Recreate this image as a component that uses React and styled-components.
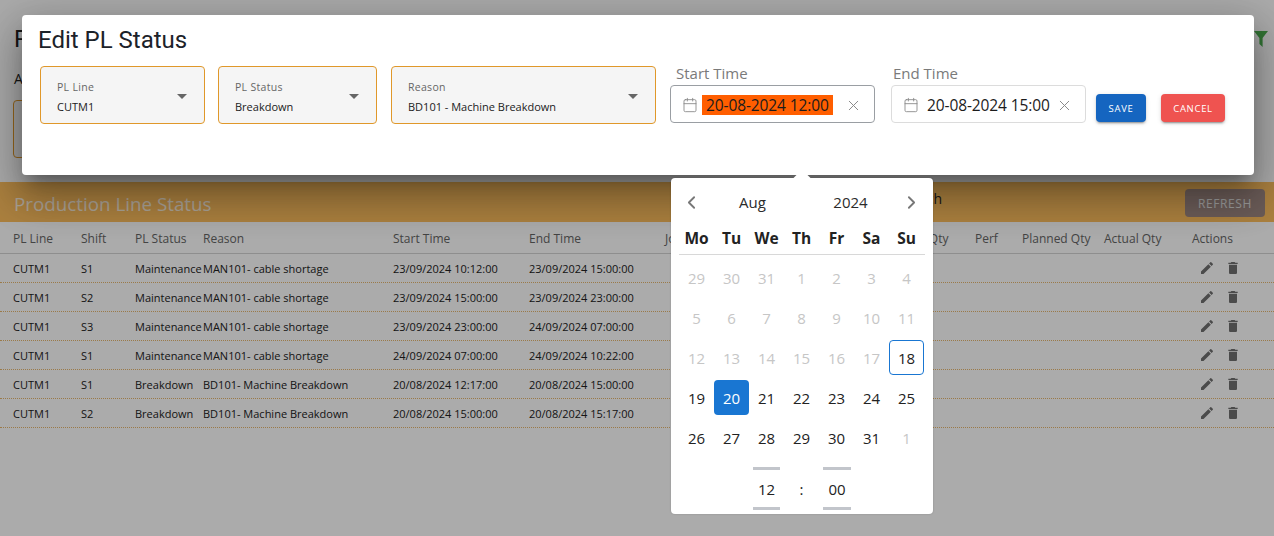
import React from 'react'
import styled, { createGlobalStyle } from 'styled-components'
import { Calendar, ChevronLeft, ChevronRight, X } from 'lucide-react'

const UI_FONT = `"Open Sans", "Noto Sans", "Liberation Sans", sans-serif`

const GLOBAL = createGlobalStyle`
	html, body {
		margin: 0;
		padding: 0;
		background: #fff;
		overflow: hidden;
	}
	* {
		box-sizing: border-box;
	}
	body {
		font-family: ${UI_FONT};
		color: #222;
	}
`

const PAGE = styled.div`
	position: relative;
	width: 1274px;
	height: 536px;
	overflow: hidden;
`

/* page behind the dialog */
const TOP_AREA = styled.div`
	height: 182px;
	padding: 26px 6px 0 14px;
	display: flex;
	flex-direction: column;
`
const TOP_TITLE_ROW = styled.div`
	display: flex;
	justify-content: space-between;
	align-items: center;
	height: 26px;
	font: 400 24px Roboto, sans-serif;
`
const TOP_LABEL = styled.div`
	margin-top: 17px;
	height: 20px;
	font-size: 14px;
`
const TOP_BOX = styled.div`
	margin-top: 11px;
	width: 170px;
	height: 58px;
	margin-left: -1px;
	border: 1px solid #e0982a;
	border-radius: 4px;
	background: #f5f5f5;
`
const BAND = styled.div`
	height: 40px;
	background: #ffbf5e;
	display: flex;
	align-items: center;
	justify-content: space-between;
	padding: 0 9px 0 14px;
	color: #fff;
`
const BAND_TITLE = styled.div`
	font-size: 18.8px;
	padding-top: 4px;
	font-weight: 400;
	opacity: 0.82;
`
const BAND_RIGHT = styled.div`
	display: flex;
	align-items: center;
	gap: 243px;
`
const BAND_SEARCH = styled.div`
	color: #222;
	font-size: 14px;
	margin-top: -8px;
`
const REFRESH = styled.div`
	width: 80px;
	height: 28px;
	margin-top: 2px;
	border-radius: 4px;
	background: #a08a84;
	color: #e6e6e6;
	font-size: 12px;
	letter-spacing: 0.6px;
	display: flex;
	align-items: center;
	justify-content: center;
`
const TABLE_ROW = styled.div`
	display: grid;
	grid-template-columns: 68px 54px 68px 190px 136px 136px 225px 85px 47px 82px 88px 1fr;
	align-items: center;
	padding-left: 13px;
	padding-top: ${({ $head }) => ($head ? '2px' : '0')};
	height: ${({ $head }) => ($head ? '32px' : '29px')};
	font-size: ${({ $head }) => ($head ? '12px' : '11px')};
	color: ${({ $head }) => ($head ? '#666' : '#222')};
	border-bottom: 1px ${({ $head }) => ($head ? 'solid #d4d4d4' : 'dotted #e8b76c')};
	white-space: nowrap;
`
const ACTIONS = styled.div`
	display: flex;
	gap: 10px;
	padding-left: 7px;
	color: #707070;
`

/* dim layer and dialog */
const OVERLAY = styled.div`
	position: absolute;
	inset: 0;
	background: rgba(0, 0, 0, 0.33);
`
const DIALOG = styled.div`
	position: absolute;
	left: 22px;
	top: 15px;
	width: 1232px;
	height: 160px;
	background: #fff;
	border-radius: 4px;
	box-shadow: 0 11px 15px -7px rgba(0, 0, 0, 0.3),
		0 24px 38px 3px rgba(0, 0, 0, 0.2),
		0 9px 46px 8px rgba(0, 0, 0, 0.18);
	padding: 11px 16px 0 16px;
`
const DIALOG_TITLE = styled.h2`
	margin: 0;
	font: 400 24px/28px Roboto, sans-serif;
	color: #1c2229;
`
const FIELD_ROW = styled.div`
	margin-top: 12px;
	margin-left: 2px;
	display: flex;
	align-items: flex-start;
`
const SELECT = styled.div`
	position: relative;
	width: ${({ $w }) => $w}px;
	margin-right: ${({ $gap }) => $gap}px;
	height: 58px;
	padding: 13px 16px 0;
	background: #f5f5f5;
	border: 1px solid #e0982a;
	border-radius: 4px;
`
const SELECT_LABEL = styled.div`
	font-size: 10.5px;
	line-height: 14px;
	letter-spacing: 0.3px;
	color: #666;
`
const SELECT_VALUE = styled.div`
	margin-top: 6px;
	font-size: 11px;
	line-height: 14px;
	color: #222;
`
const CARET = styled.span`
	position: absolute;
	right: 17px;
	top: 27px;
	border-left: 5.5px solid transparent;
	border-right: 5.5px solid transparent;
	border-top: 5px solid #666;
`
const DATE_BLOCK = styled.div`
	width: ${({ $w }) => $w}px;
	margin-right: ${({ $gap }) => $gap}px;
`
const DATE_LABEL = styled.div`
	height: 19px;
	padding-left: ${({ $pad }) => $pad}px;
	font-size: 15px;
	line-height: 14px;
	color: #7a7a7a;
`
const DATE_INPUT = styled.div`
	height: 38px;
	display: flex;
	align-items: center;
	padding: 2px 12px 0 11px;
	border: 1px solid ${({ $active }) => ($active ? '#9a9ea3' : '#dcdcdc')};
	border-radius: 4px;
	color: #888;
`
const DATE_TEXT = styled.span`
	margin-left: ${({ $active }) => ($active ? '4px' : '8px')};
	padding: 0 ${({ $active }) => ($active ? '4px' : '0')};
	height: 20px;
	font-size: 15.5px;
	line-height: 20px;
	letter-spacing: -0.1px;
	white-space: nowrap;
	color: #1c1c1c;
	background: ${({ $active }) => ($active ? '#ff5e00' : 'transparent')};
`
const CLEAR = styled.span`
	margin-left: auto;
	display: flex;
	color: #8a8a8a;
`
const BUTTON = styled.div`
	width: ${({ $w }) => $w}px;
	margin-top: 28px;
	margin-right: ${({ $gap }) => $gap}px;
	height: 28px;
	border-radius: 4px;
	background: ${({ $bg }) => $bg};
	color: #fff;
	font-size: 9.5px;
	letter-spacing: 0.7px;
	display: flex;
	align-items: center;
	justify-content: center;
	box-shadow: 0 3px 1px -2px rgba(0, 0, 0, 0.2), 0 2px 2px rgba(0, 0, 0, 0.14), 0 1px 5px rgba(0, 0, 0, 0.12);
`

/* date picker popover */
const POPOVER = styled.div`
	position: absolute;
	left: 671px;
	top: 178px;
	width: 262px;
	height: 336px;
	padding: 0 8px;
	background: #fff;
	border-radius: 4px;
	box-shadow: 0 0 2px rgba(0, 0, 0, 0.2);

	&::before {
		content: '';
		position: absolute;
		left: 125px;
		top: -6px;
		width: 12px;
		height: 12px;
		background: #fff;
		transform: rotate(45deg);
	}
`
const CAL_HEADER = styled.div`
	position: relative;
	height: 48px;
	padding-right: 2px;
	display: grid;
	grid-template-columns: 25px 97px 99px 1fr;
	align-items: center;
	font-size: 15px;
	color: #2b2b2b;
	text-align: center;
`
const NAV = styled.span`
	display: flex;
	justify-content: center;
	color: #777;
`
const WEEK_HEAD = styled.div`
	display: grid;
	grid-template-columns: repeat(7, 35px);
	height: 29px;
	border-bottom: 1px solid #d8d8d8;
	font-size: 15.5px;
	font-weight: 700;
	line-height: 24px;
	text-align: center;
	color: #222;
`
const DAY_GRID = styled.div`
	display: grid;
	grid-template-columns: repeat(7, 35px);
	grid-auto-rows: 40px;
	margin-top: 2px;
`
const DAY = styled.div`
	display: flex;
	align-items: center;
	justify-content: center;
	height: 35px;
	margin-top: 3px;
	font-size: 15px;
	border-radius: 4px;
	color: ${({ $muted, $selected }) => ($selected ? '#fff' : $muted ? '#c6c6c6' : '#222')};
	background: ${({ $selected }) => ($selected ? '#1976d2' : 'transparent')};
	border: ${({ $today }) => ($today ? '1px solid #1976d2' : 'none')};
`
const TIME_ROW = styled.div`
	display: grid;
	grid-template-columns: 27px 43px 28px;
	justify-content: center;
	margin-top: 10px;
`
const TIME_CELL = styled.div`
	height: 43px;
	padding-top: 1px;
	display: flex;
	align-items: center;
	justify-content: center;
	font-size: 15px;
	color: #222;
	border-top: ${({ $bars }) => ($bars ? '3px solid #c2c5cb' : 'none')};
	border-bottom: ${({ $bars }) => ($bars ? '3px solid #c2c5cb' : 'none')};
`

const ROWS = [
	['CUTM1', 'S1', 'Maintenance', 'MAN101- cable shortage', '23/09/2024 10:12:00', '23/09/2024 15:00:00'],
	['CUTM1', 'S2', 'Maintenance', 'MAN101- cable shortage', '23/09/2024 15:00:00', '23/09/2024 23:00:00'],
	['CUTM1', 'S3', 'Maintenance', 'MAN101- cable shortage', '23/09/2024 23:00:00', '24/09/2024 07:00:00'],
	['CUTM1', 'S1', 'Maintenance', 'MAN101- cable shortage', '24/09/2024 07:00:00', '24/09/2024 10:22:00'],
	['CUTM1', 'S1', 'Breakdown', 'BD101- Machine Breakdown', '20/08/2024 12:17:00', '20/08/2024 15:00:00'],
	['CUTM1', 'S2', 'Breakdown', 'BD101- Machine Breakdown', '20/08/2024 15:00:00', '20/08/2024 15:17:00'],
]
const HEADS = ['PL Line', 'Shift', 'PL Status', 'Reason', 'Start Time', 'End Time', 'Job', 'Target Qty', 'Perf', 'Planned Qty', 'Actual Qty', 'Actions']
const WEEK = ['Mo', 'Tu', 'We', 'Th', 'Fr', 'Sa', 'Su']
const DAYS = [
	...[29, 30, 31].map((d) => ({ d, muted: true })),
	...Array.from({ length: 18 }, (_, i) => ({ d: i + 1, muted: i + 1 !== 18 })),
	...Array.from({ length: 13 }, (_, i) => ({ d: i + 19 })),
	{ d: 1, muted: true },
].map((item) => ({ ...item, selected: item.d === 20, today: item.d === 18 }))

const EDIT_ICON = () => (
	<svg width="16" height="16" viewBox="0 0 24 24" fill="currentColor">
		<path d="M3 17.25V21h3.75L17.81 9.94l-3.75-3.75L3 17.25zM20.71 7.04c.39-.39.39-1.02 0-1.41l-2.34-2.34a.9959.9959 0 0 0-1.41 0l-1.83 1.83 3.75 3.75 1.83-1.83z" />
	</svg>
)
const DELETE_ICON = () => (
	<svg width="16" height="16" viewBox="0 0 24 24" fill="currentColor">
		<path d="M6 19c0 1.1.9 2 2 2h8c1.1 0 2-.9 2-2V7H6v12zM19 4h-3.5l-1-1h-5l-1 1H5v2h14V4z" />
	</svg>
)
const FILTER_ICON = () => (
	<svg width="14" height="16" viewBox="0 0 14 16" fill="#4caf50">
		<path d="M0 0h14L8.6 7V16L5.4 13V7z" />
	</svg>
)

const APP = () => {
	return (
		<PAGE>
			<GLOBAL />
			<TOP_AREA>
				<TOP_TITLE_ROW>
					<span>PL Status</span>
					<FILTER_ICON />
				</TOP_TITLE_ROW>
				<TOP_LABEL>Add</TOP_LABEL>
				<TOP_BOX />
			</TOP_AREA>
			<BAND>
				<BAND_TITLE>Production Line Status</BAND_TITLE>
				<BAND_RIGHT>
					<BAND_SEARCH>Search</BAND_SEARCH>
					<REFRESH>REFRESH</REFRESH>
				</BAND_RIGHT>
			</BAND>
			<TABLE_ROW $head>
				{HEADS.map((h) => (
					<div key={h}>{h}</div>
				))}
			</TABLE_ROW>
			{ROWS.map((row, i) => (
				<TABLE_ROW key={i}>
					{row.map((cell, j) => (
						<div key={j}>{cell}</div>
					))}
					<div />
					<div />
					<div />
					<div />
					<div />
					<ACTIONS>
						<EDIT_ICON />
						<DELETE_ICON />
					</ACTIONS>
				</TABLE_ROW>
			))}

			<OVERLAY />

			<DIALOG>
				<DIALOG_TITLE>Edit PL Status</DIALOG_TITLE>
				<FIELD_ROW>
					<SELECT $w={165} $gap={13}>
						<SELECT_LABEL>PL Line</SELECT_LABEL>
						<SELECT_VALUE>CUTM1</SELECT_VALUE>
						<CARET />
					</SELECT>
					<SELECT $w={159} $gap={14}>
						<SELECT_LABEL>PL Status</SELECT_LABEL>
						<SELECT_VALUE>Breakdown</SELECT_VALUE>
						<CARET />
					</SELECT>
					<SELECT $w={265} $gap={14}>
						<SELECT_LABEL>Reason</SELECT_LABEL>
						<SELECT_VALUE>BD101 - Machine Breakdown</SELECT_VALUE>
						<CARET />
					</SELECT>
					<DATE_BLOCK $w={205} $gap={16}>
						<DATE_LABEL $pad={6}>Start Time</DATE_LABEL>
						<DATE_INPUT $active>
							<Calendar size={16} strokeWidth={1.3} />
							<DATE_TEXT $active>20-08-2024 12:00</DATE_TEXT>
							<CLEAR>
								<X size={17} strokeWidth={1.4} />
							</CLEAR>
						</DATE_INPUT>
					</DATE_BLOCK>
					<DATE_BLOCK $w={195} $gap={10}>
						<DATE_LABEL $pad={2}>End Time</DATE_LABEL>
						<DATE_INPUT>
							<Calendar size={16} strokeWidth={1.3} />
							<DATE_TEXT>20-08-2024 15:00</DATE_TEXT>
							<CLEAR>
								<X size={17} strokeWidth={1.4} />
							</CLEAR>
						</DATE_INPUT>
					</DATE_BLOCK>
					<BUTTON $w={50} $gap={15} $bg="#1565c0">SAVE</BUTTON>
					<BUTTON $w={64} $gap={0} $bg="#ef5350">CANCEL</BUTTON>
				</FIELD_ROW>
			</DIALOG>

			<POPOVER>
				<CAL_HEADER>
					<NAV>
						<ChevronLeft size={21} strokeWidth={2.1} />
					</NAV>
					<span>Aug</span>
					<span>2024</span>
					<NAV>
						<ChevronRight size={21} strokeWidth={2.1} />
					</NAV>
				</CAL_HEADER>
				<WEEK_HEAD>
					{WEEK.map((w) => (
						<div key={w}>{w}</div>
					))}
				</WEEK_HEAD>
				<DAY_GRID>
					{DAYS.map((item, i) => (
						<DAY key={i} $muted={item.muted} $selected={item.selected && !item.muted} $today={item.today && !item.muted}>
							{item.d}
						</DAY>
					))}
				</DAY_GRID>
				<TIME_ROW>
					<TIME_CELL $bars>12</TIME_CELL>
					<TIME_CELL>:</TIME_CELL>
					<TIME_CELL $bars>00</TIME_CELL>
				</TIME_ROW>
			</POPOVER>
		</PAGE>
	)
}

export default APP
